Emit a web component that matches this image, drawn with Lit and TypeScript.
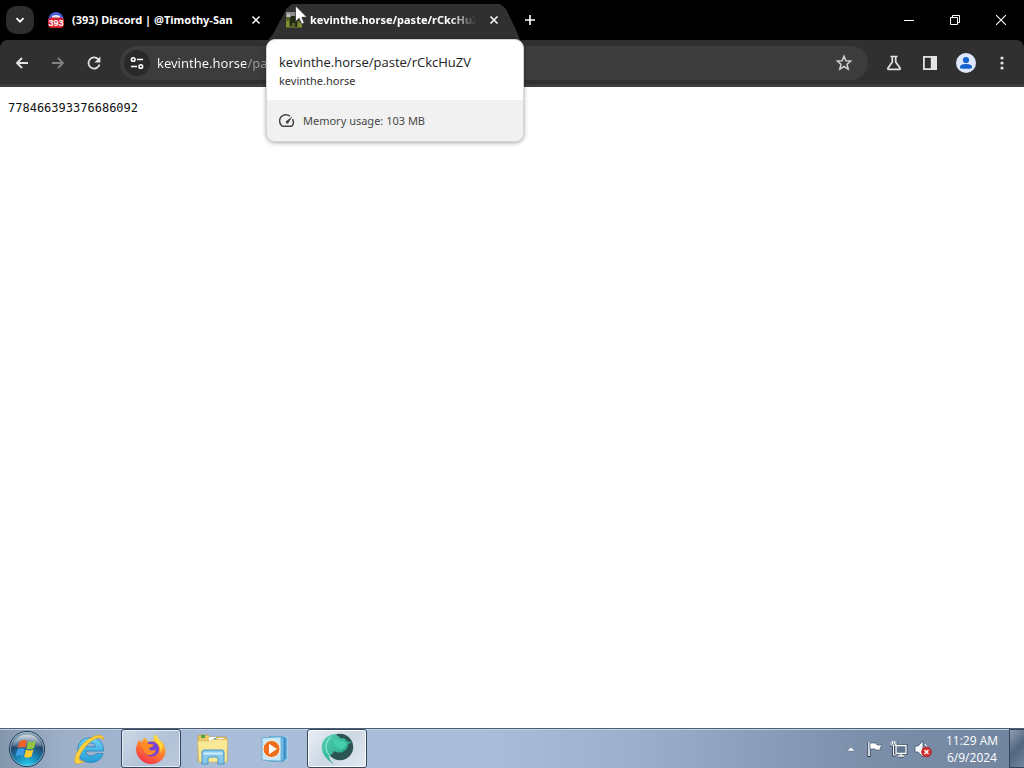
import { LitElement, html, css, svg, TemplateResult } from "lit";
import { customElement } from "lit/decorators.js";

const icon = (size: number, box: number, body: TemplateResult) =>
  html`<svg width=${size} height=${size} viewBox="0 0 ${box} ${box}" aria-hidden="true">${body}</svg>`;

const closeGlyph = icon(
  10, 10,
  svg`<path d="M1.5 1.5l7 7M8.5 1.5l-7 7" stroke="currentColor" stroke-width="1.5" fill="none"/>`
);

@customElement("tab-strip")
class TabStrip extends LitElement {
  static styles = css`
    :host { display: flex; align-items: stretch; height: 40px; background: #000; color: #fff; font: 700 11px/16px "Noto Sans", "Open Sans", sans-serif; }
    button { border: 0; padding: 0; background: none; color: inherit; display: grid; place-items: center; }
    .search { width: 28px; height: 28px; margin: 6px 4px 6px 6px; border-radius: 10px; background: #2d2d2d; flex: none; }
    .tab { position: relative; display: flex; align-items: center; flex: 0 1 238px; min-width: 0; box-sizing: border-box; padding: 0 10px; gap: 8px; }
    .tab.active::before { content: ""; position: absolute; z-index: 0; inset: 4px -6px 0 -8px; background: #303030; clip-path: polygon(0 100%, 5px 30px, 19px 4px, 24px 0, calc(100% - 20px) 0, calc(100% - 14px) 5px, calc(100% - 3px) 28px, 100% 100%); }
    .tab > * { position: relative; }
    .favicon { width: 16px; height: 16px; flex: none; display: block; }
    .title { flex: 1; min-width: 0; overflow: hidden; white-space: nowrap; }
    .fade { mask-image: linear-gradient(90deg, #000 calc(100% - 26px), transparent); }
    .close { width: 20px; height: 20px; flex: none; }
    .add { width: 32px; flex: none; }
    .window { display: flex; margin-left: auto; flex: none; }
    .window button { width: 46px; }
  `;
  render() {
    return html`
      <button class="search" aria-label="Search tabs">${icon(10, 10, svg`<path d="M1.5 3.2L5 6.7l3.5-3.5" fill="none" stroke="#fff" stroke-width="1.7"/>`)}</button>
      <div class="tab">
        <svg class="favicon" viewBox="0 0 16 16" aria-hidden="true">
          <circle cx="8" cy="7.5" r="7.5" fill="#4a60d8"/>
          <path d="M4 4q4-2 8 0v2H4z" fill="#e8ebff"/>
          <rect y="5.5" width="16" height="10.5" rx="4" fill="#d9222e"/>
          <text x="8" y="14" text-anchor="middle" font-family="Liberation Sans, sans-serif" font-weight="700" font-size="9" fill="#fff">393</text>
        </svg>
        <span class="title">(393) Discord | @Timothy-San</span>
        <button class="close" aria-label="Close tab">${closeGlyph}</button>
      </div>
      <div class="tab active">
        <svg class="favicon" viewBox="0 0 16 16" aria-hidden="true">
          <rect width="16" height="16" fill="#59652a"/>
          <path d="M0 0h11v5H0z" fill="#8d918d"/>
          <path d="M1 2h3v3H1z" fill="#bdc2be"/>
          <path d="M5 4h8v5h-2v6H9v-4H6v3H4V7z" fill="#242b15"/>
          <path d="M0 9h3v6H0zM12 11h4v4h-4z" fill="#7d8d2e"/>
        </svg>
        <span class="title fade">kevinthe.horse/paste/rCkcHuZV</span>
        <button class="close" aria-label="Close tab">${closeGlyph}</button>
      </div>
      <button class="add" aria-label="New tab">${icon(12, 12, svg`<path d="M6 1v10M1 6h10" stroke="#fff" stroke-width="1.6"/>`)}</button>
      <div class="window">
        <button aria-label="Minimize">${icon(10, 10, svg`<path d="M0 5.5h10" stroke="#fff"/>`)}</button>
        <button aria-label="Restore">${icon(10, 10, svg`<path d="M.5 2.5h7v7h-7zM2.5 2.5v-2h7v7h-2" fill="none" stroke="#fff"/>`)}</button>
        <button aria-label="Close">${icon(10, 10, svg`<path d="M0 0l10 10M10 0L0 10" stroke="#fff" stroke-width="1.1"/>`)}</button>
      </div>`;
  }
}

@customElement("tool-bar")
class ToolBar extends LitElement {
  static styles = css`
    :host { display: block; background: #000; }
    .bar { display: flex; align-items: center; height: 47px; box-sizing: border-box; padding: 2px 4px 0; background: #303030; border-bottom: 3px solid #3c3c3c; border-radius: 8px 8px 0 0; color: #e3e3e3; }
    button { width: 36px; height: 36px; border: 0; padding: 0; background: none; color: inherit; display: grid; place-items: center; flex: none; }
    .dim { color: #808080; }
    .omnibox { flex: 1; min-width: 0; display: flex; align-items: center; height: 34px; margin: 0 8px; padding: 0 6px 0 4px; box-sizing: border-box; border-radius: 17px; background: #3c3c3c; }
    .omnibox button { height: 26px; }
    .omnibox .site { width: 26px; border-radius: 13px; background: #292929; }
    input { flex: 1; min-width: 0; border: 0; outline: 0; margin: 0 0 0 7px; padding: 0; height: 20px; font: 13px/20px "Noto Sans", "Open Sans", sans-serif; color: transparent; background: linear-gradient(90deg, #fff 89px, #9c9c9c 89px); background-clip: text; -webkit-background-clip: text; }
  `;
  render() {
    const arrow = svg`<path d="M14 8H3M8 3L3 8l5 5" fill="none" stroke="currentColor" stroke-width="1.8"/>`;
    return html`<div class="bar">
      <button aria-label="Back">${icon(16, 16, arrow)}</button>
      <button class="dim" aria-label="Forward" disabled>${icon(16, 16, svg`<g transform="rotate(180 8 8)">${arrow}</g>`)}</button>
      <button aria-label="Reload">${icon(16, 16, svg`<path d="M13.5 9.5A5.6 5.6 0 1 1 12.2 4.2L13.6 6" fill="none" stroke="currentColor" stroke-width="1.8"/><path d="M14.4 1.5v6h-6z" fill="currentColor"/>`)}</button>
      <div class="omnibox">
        <button class="site" aria-label="Site information">${icon(16, 16, svg`<g fill="none" stroke="#fff" stroke-width="1.6"><circle cx="4.2" cy="4.5" r="1.8"/><path d="M8 4.5h6M2 11.5h6"/><circle cx="11.8" cy="11.5" r="1.8"/></g>`)}</button>
        <input type="text" aria-label="Address and search bar" spellcheck="false" .value=${"kevinthe.horse/paste/rCkcHuZV"} />
        <button aria-label="Bookmark this tab">${icon(18, 18, svg`<path d="M9 2.2l1.9 4.5 4.8.4-3.7 3.2 1.2 4.8L9 12.5l-4.2 2.6L6 10.3 2.3 7.1l4.8-.4z" fill="none" stroke="#d0d0d0" stroke-width="1.5"/>`)}</button>
      </div>
      <button aria-label="Experiments">${icon(16, 16, svg`<path d="M4.5 1.5h7M6.3 2v5L1.9 13.2q-.4 1.1.8 1.1h10.6q1.2 0 .8-1.1L9.7 7V2" fill="none" stroke="currentColor" stroke-width="1.7"/>`)}</button>
      <button aria-label="Side panel">${icon(16, 16, svg`<path d="M1 1h14v14H1zM2.8 2.8v10.4h6V2.8z" fill="currentColor" fill-rule="evenodd"/>`)}</button>
      <button aria-label="Profile">${icon(20, 20, svg`<circle cx="10" cy="10" r="10" fill="#dde9fb"/><circle cx="10" cy="7" r="3.1" fill="#1463cf"/><path d="M4 15.2v-1q0-3.2 6-3.2t6 3.2v1q-6 1.2-12 0z" fill="#1463cf"/>`)}</button>
      <button aria-label="Menu">${icon(16, 16, svg`<g fill="currentColor"><circle cx="8" cy="3" r="1.6"/><circle cx="8" cy="8" r="1.6"/><circle cx="8" cy="13" r="1.6"/></g>`)}</button>
    </div>`;
  }
}

@customElement("tab-card")
class TabCard extends LitElement {
  static styles = css`
    :host { display: block; width: 258px; box-sizing: border-box; border-radius: 9px; overflow: hidden; background: #fff; border: 1px solid #d4d4d4; box-shadow: 0 1px 4px rgba(0, 0, 0, 0.35); color: #202124; font: 11px/18px "Noto Sans", "Open Sans", sans-serif; }
    .page { padding: 12px 12px 10px; }
    .title { font: 13px/20px "Open Sans", "Noto Sans", sans-serif; }
    .host { color: #333; }
    .memory { display: flex; align-items: center; gap: 8px; height: 41px; padding: 0 12px; background: #f1f1f1; color: #474747; }
  `;
  render() {
    return html`
      <div class="page"><div class="title">kevinthe.horse/paste/rCkcHuZV</div><div class="host">kevinthe.horse</div></div>
      <div class="memory">
        ${icon(16, 16, svg`<path d="M11 3.3A6 6 0 0 0 2.7 12.7q.4.5 1.2.5h8.2q.8 0 1.2-.5a6 6 0 0 0 .2-6.5" fill="none" stroke="#444" stroke-width="1.5"/><path d="M13.5 3.3L9.3 10.3A1.6 1.6 0 0 1 7 8.2z" fill="#444"/>`)}
        <span>Memory usage: 103 MB</span>
      </div>`;
  }
}

@customElement("task-bar")
class TaskBar extends LitElement {
  static styles = css`
    :host { display: flex; height: 40px; box-sizing: border-box; border-top: 1px solid #4c6078; box-shadow: inset 0 1px #c3d0df; background: linear-gradient(90deg, #8497ad 0, #9dafc7 6%, #a9bdd8 20%, #a9bdd8 48%, #9db0cb 62%, #7c90ab 84%, #71849e 100%); color: #fff; font: 12px/17px "Open Sans", "Noto Sans", sans-serif; }
    button { border: 0; padding: 0; background: none; color: inherit; font: inherit; display: grid; place-items: center; }
    .start { width: 54px; margin-right: 5px; }
    .apps { display: flex; gap: 2px; }
    .app { width: 60px; border: 1px solid transparent; }
    .open { border-color: #34475e; border-radius: 3px; box-shadow: inset 0 0 0 1px #e2eaf3; background: linear-gradient(135deg, #ccd8e6, #b1c1d6 60%, #bccbdd); }
    .front { background: linear-gradient(135deg, #e9eff6, #ccd7e4 50%, #e2e9f1); box-shadow: inset 0 0 0 1px #fff; }
    .tray { display: flex; margin-left: auto; align-items: stretch; }
    .tray button { width: 24px; }
    .tray .clock { width: 74px; text-align: center; }
    .clock span { display: block; }
    .tray .desktop { width: 15px; border: 1px solid #34445a; border-right: 0; background: linear-gradient(135deg, #8fa0b5, #53667f 50%, #71859d); }
  `;
  render() {
    return html`
      <button class="start" aria-label="Start">
        ${icon(38, 38, svg`
          <defs>
            <radialGradient id="orb" cx=".5" cy="1" r=".95"><stop offset="0" stop-color="#28d4f2"/><stop offset=".38" stop-color="#1a86b8"/><stop offset=".7" stop-color="#20466b"/><stop offset="1" stop-color="#8fa6b8"/></radialGradient>
            <linearGradient id="gloss" x2="0" y2="1"><stop offset="0" stop-color="#fff" stop-opacity=".65"/><stop offset="1" stop-color="#fff" stop-opacity=".08"/></linearGradient>
          </defs>
          <circle cx="19" cy="19" r="17.6" fill="url(#orb)" stroke="#223a52"/>
          <circle cx="19" cy="19" r="16.6" fill="none" stroke="#a8c8d8" stroke-opacity=".6"/>
          <path d="M4 16A15.5 15.5 0 0 1 34 16Q19 20 4 16z" fill="url(#gloss)"/>
          <path d="M11.5 11.5q3.5-2.6 7.5-.7l-1.8 7q-3.8-1.8-7.5.5z" fill="#ee6129"/>
          <path d="M20.2 11.3q4 2 7.6-.2l-1.9 7.1q-3.6 2.2-7.5.2z" fill="#91c83e"/>
          <path d="M9.3 19.5q3.6-2.3 7.5-.5l-1.9 7.2q-3.8-1.9-7.4.5z" fill="#3b9de3"/>
          <path d="M18 19.6q3.9 2 7.5-.2l-2 7.2q-3.5 2.2-7.4.2z" fill="#ffcb31"/>`)}
      </button>
      <div class="apps">
        <button class="app" aria-label="Internet Explorer">${icon(32, 32, svg`
          <defs><linearGradient id="ie" x2="0" y2="1"><stop stop-color="#70d3f7"/><stop offset="1" stop-color="#229bd6"/></linearGradient></defs>
          <path d="M30.5 18H12.5q.5 5 5.6 5 3.7 0 5-2.3h7Q27.3 29.5 17.5 29.5 5 29 4.5 17.4 5 4.9 17.5 4.5 31 5.3 30.5 18zM12.7 13.8h10.2q-.8-4-5-4t-5.2 4z" fill="url(#ie)" stroke="#2381b8" stroke-width=".8"/>
          <path d="M30.8 6.8Q30.7.5 22 3 10.5 7 4 19.5-1.3 31.5 5.6 30.6q3-.4 6.2-2.8-5.3 1.7-5.7-2C6 20.5 14.5 8.7 23 5.5q5.5-2 7.8 1.3z" fill="#ffd23d" stroke="#dfa21a" stroke-width=".6"/>`)}</button>
        <button class="app open" aria-label="Firefox">${icon(32, 32, svg`
          <defs><linearGradient id="fx" x1=".8" x2=".3" y2="1"><stop stop-color="#ffe13f"/><stop offset=".45" stop-color="#ff8a2a"/><stop offset="1" stop-color="#f5304e"/></linearGradient></defs>
          <path d="M20 1.5q3 2 3.6 5 4.8 2 6.3 7.8Q32 21 27 26.5A15 15 0 0 1 5 26Q-.6 20 1.6 12.5 2.6 8.6 4.6 6.2 4.8 8.5 6 9.6 8 5.5 11 4.6 10.8 7 13 8.4q5 .2 6-.8-1-3 1-6.1z" fill="url(#fx)"/>
          <circle cx="16.5" cy="16" r="7.6" fill="#7542d5"/>
          <path d="M5.5 12q4-3.6 8-1.2 2.6.6 5.5.6-1 2.6-4.3 3.2-1.5 2.6 2 3 2.3 0 4.2-1.4-.9 5.4-6.2 5.8Q9.5 22 8.500 16 6.500 14 5.500 12z" fill="#ff8b22"/>
          <path d="M20 1.5q-2 5 2 8.5 5 4 3 10 4-5 1.6-9.5Q24 6.5 20 1.5z" fill="#ffdc3d"/>`)}</button>
        <button class="app" aria-label="Windows Explorer">${icon(34, 34, svg`
          <path d="M2 5q0-2 2-2h8l2 2h15q2 0 2 2v22H2z" fill="#e9ca67" stroke="#b99a45" stroke-width=".7"/>
          <path d="M5 3h4v3H5z" fill="#55a245"/><path d="M13 5h7v4h-7zM22 6h6v4h-6z" fill="#fff"/><path d="M18 6h2v2h-2z" fill="#4d95d3"/><path d="M26 7h2v2h-2z" fill="#b44b3c"/>
          <path d="M1.5 9h13l2-1.5h15L31 30H3z" fill="#f9e996" stroke="#d0b15c" stroke-width=".6"/>
          <path d="M6 20q0-2 2-2h18q2 0 2 2v12h-6v-5q0-2-2-2h-6q-2 0-2 2v5H6z" fill="#85c8eb" stroke="#4a95c2"/>
          <path d="M7.5 20.5h19v2h-19z" fill="#d0effc"/>`)}</button>
        <button class="app" aria-label="Windows Media Player">${icon(30, 30, svg`
          <path d="M12 3h15v23H12z" fill="#4295ce" stroke="#a4d9f3"/><path d="M9 3h15v24H9z" fill="#75bce4" stroke="#257eb8" stroke-width=".7"/><path d="M2 4q9-1 19-1v24q-10 0-19-1z" fill="#c7e8f8" stroke="#5ba8d1" stroke-width=".8"/>
          <circle cx="11.5" cy="15" r="8.5" fill="#ed6f1c" stroke="#fff0dc"/><path d="M9 9.7L17 15l-8 5.3z" fill="#fff"/>`)}</button>
        <button class="app open front" aria-label="Browser">${icon(34, 34, svg`
          <defs><linearGradient id="teal" x2="1" y2="1"><stop stop-color="#58d2b3"/><stop offset="1" stop-color="#179f83"/></linearGradient></defs>
          <circle cx="20" cy="15" r="13.2" fill="#2b5453"/>
          <path d="M15 2Q5 3 2 12-.5 24 15 33 9 28 9 23.500q4-1 5-4.500 6 3 10 0 4-2 4-7l4-2-5-.5q-2-4-6-3-3-3-6-4.500z" fill="url(#teal)"/>
          <path d="M13 8q4-2 7 1.500 3-2 6 1.500 0 5-6 6.500-6-3-7-9.500z" fill="#45cfac"/>
          <path d="M11 5q-5 4-5 10 0 4 3 8" fill="none" stroke="#8ee8d2" stroke-width="1.2"/>`)}</button>
      </div>
      <div class="tray">
        <button aria-label="Show hidden icons">${icon(8, 8, svg`<path d="M0 6l4-4 4 4z" fill="#fff" stroke="#45566c" stroke-width=".4"/>`)}</button>
        <button aria-label="Action Center">${icon(18, 18, svg`<path d="M3 2v15" stroke="#24364c" stroke-width="3"/><path d="M3 2v14" stroke="#fff" stroke-width="1.6"/><path d="M4 3h6l1 2h5l-2 3.5 1 1.5h-5l-1-1H4z" fill="#fff" stroke="#34475d" stroke-width=".6"/>`)}</button>
        <button aria-label="Network">${icon(18, 18, svg`<g fill="none" stroke="#2c3e54" stroke-width="2.8"><path d="M6 5.5h10v8H6zM8 16h6"/><path d="M1 2v3h5V2M3.5 5v10H6"/></g><path d="M6 5.5h10v8H6zM8 16h6M11 14v2" fill="#607690" stroke="#fff" stroke-width="1.3"/><path d="M1 2v3h5V2M2.5 1v3M4.5 1v3M3.5 5v10H6" fill="none" stroke="#fff" stroke-width="1.1"/>`)}</button>
        <button aria-label="Volume muted">${icon(18, 18, svg`<path d="M1 6h3l5-5v16l-5-5H1z" fill="#f4f7fa" stroke="#3b4d63" stroke-width=".7"/><path d="M11 4q2 2 2 5" fill="none" stroke="#fff"/><circle cx="12.5" cy="12" r="5" fill="#d82d2c" stroke="#912020" stroke-width=".5"/><path d="M10.5 10l4 4M14.5 10l-4 4" stroke="#fff" stroke-width="1.5"/>`)}</button>
        <button class="clock"><time><span>11:29 AM</span><span>6/9/2024</span></time></button>
        <button class="desktop" aria-label="Show desktop"></button>
      </div>`;
  }
}

@customElement("app-root")
class AppRoot extends LitElement {
  static styles = css`
    :host { display: flex; flex-direction: column; position: relative; height: 100vh; overflow: hidden; background: #fff; }
    main { flex: 1; min-height: 0; overflow: auto; }
    pre { margin: 0; padding: 14px 8px; color: #111; font: 12px/15px "DejaVu Sans Mono", monospace; }
    .card { position: absolute; left: 266px; top: 39px; }
    .pointer { position: absolute; left: 295px; top: 5px; pointer-events: none; }
  `;
  render() {
    return html`
      <tab-strip></tab-strip>
      <tool-bar></tool-bar>
      <main><pre>778466393376686092</pre></main>
      <task-bar></task-bar>
      <tab-card class="card"></tab-card>
      <svg class="pointer" width="13" height="20" viewBox="0 0 13 20" aria-hidden="true"><path d="M.5.8v16l3.7-3.5 2.5 5.9 2.6-1.1L6.8 12.3h5.2z" fill="#fff" stroke="#222" stroke-width=".7"/></svg>`;
  }
}
